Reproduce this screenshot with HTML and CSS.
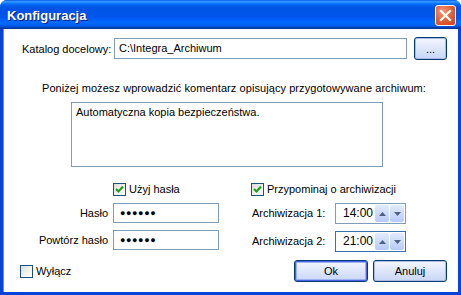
FILE: index.html
```html
<!DOCTYPE html>
<html lang="pl">
<head>
<meta charset="utf-8">
<title>Konfiguracja</title>
<link rel="stylesheet" href="styles.css">
</head>
<body>
<div class="window">
  <div class="titlebar">
    <span class="title">Konfiguracja</span>
    <span class="close">
      <svg width="13" height="13" viewBox="0 0 13 13"><path d="M2 2 L11 11 M11 2 L2 11" stroke="#fff" stroke-width="2.2" stroke-linecap="square"/></svg>
    </span>
  </div>
  <div class="client">
    <div class="row-path">
      <span class="path-label">Katalog docelowy:</span>
      <div class="field path-field">C:\Integra_Archiwum</div>
      <button class="btn btn-browse">...</button>
    </div>
    <p class="hint">Poniżej możesz wprowadzić komentarz opisujący przygotowywane archiwum:</p>
    <div class="field memo">Automatyczna kopia bezpieczeństwa.</div>
    <div class="options">
      <div class="group group-pass">
        <label class="check cell-2"><span class="box checked"><svg width="11" height="11" viewBox="0 0 11 11"><path d="M2 5 L4.5 7.5 L9 2.5" fill="none" stroke="#21a121" stroke-width="2.2"/></svg></span>Użyj hasła</label>
        <span class="lbl right">Hasło</span>
        <div class="field pass">●●●●●●</div>
        <span class="lbl right">Powtórz hasło</span>
        <div class="field pass">●●●●●●</div>
      </div>
      <div class="group group-time">
        <label class="check span-2"><span class="box checked"><svg width="11" height="11" viewBox="0 0 11 11"><path d="M2 5 L4.5 7.5 L9 2.5" fill="none" stroke="#21a121" stroke-width="2.2"/></svg></span>Przypominaj o archiwizacji</label>
        <span class="lbl">Archiwizacja 1:</span>
        <div class="spin">
          <span class="spin-val">14:00</span>
          <span class="spin-btn"><svg width="7" height="4" viewBox="0 0 7 4"><path d="M0 4 L3.5 0 L7 4Z" fill="#4d6185"/></svg></span>
          <span class="spin-btn"><svg width="7" height="4" viewBox="0 0 7 4"><path d="M0 0 L3.5 4 L7 0Z" fill="#4d6185"/></svg></span>
        </div>
        <span class="lbl">Archiwizacja 2:</span>
        <div class="spin focus">
          <span class="spin-val">21:00</span>
          <span class="spin-btn"><svg width="7" height="4" viewBox="0 0 7 4"><path d="M0 4 L3.5 0 L7 4Z" fill="#4d6185"/></svg></span>
          <span class="spin-btn"><svg width="7" height="4" viewBox="0 0 7 4"><path d="M0 0 L3.5 4 L7 0Z" fill="#4d6185"/></svg></span>
        </div>
      </div>
    </div>
    <div class="footer">
      <label class="check"><span class="box"></span>Wyłącz</label>
      <div class="buttons">
        <button class="btn btn-main default">Ok</button>
        <button class="btn btn-main">Anuluj</button>
      </div>
    </div>
  </div>
</div>
</body>
</html>
```
FILE: styles.css
```css
* { box-sizing: border-box; }
html, body { margin: 0; padding: 0; background: #fff; }
body { width: 461px; height: 295px; overflow: hidden; font-family: "Liberation Sans", Arial, sans-serif; font-size: 11px; color: #000; }

.window {
  width: 461px;
  height: 295px;
  display: flex;
  flex-direction: column;
  background: #0842d6;
  border-radius: 7px 7px 0 0;
  overflow: hidden;
}
.titlebar {
  height: 29px;
  flex: none;
  display: flex;
  align-items: center;
  justify-content: space-between;
  padding: 0 5px 0 7px;
  background: linear-gradient(to bottom, #0058ee 0%, #3593ff 5%, #288eff 8%, #127dff 11%, #036ffc 14%, #0262ee 18%, #0057e5 24%, #0054e3 30%, #0055eb 56%, #005bf5 66%, #026afe 76%, #0062ef 86%, #0052d6 92%, #0040ab 96%, #003092 100%);
}
.title {
  font-family: "Liberation Sans", Arial, sans-serif;
  font-weight: bold;
  font-size: 13px;
  color: #fff;
  text-shadow: 1px 1px 0 #0a1883;
  padding-top: 1px;
}
.close {
  width: 21px;
  height: 21px;
  border: 1px solid #fff;
  border-radius: 3px;
  background: radial-gradient(circle at 35% 30%, #f29a7a 0%, #e3643c 45%, #cc4218 100%);
  display: flex;
  align-items: center;
  justify-content: center;
  margin-top: 1px;
}
.client {
  flex: 1;
  margin: 0 3px 3px 3px;
  background: #fff;
  display: flex;
  flex-direction: column;
  border-left: 1px solid #5d8ef0;
}

.field {
  border: 1px solid #7f9db9;
  background: #fff;
  padding: 0 5px;
  white-space: nowrap;
}

.row-path {
  display: flex;
  align-items: center;
  margin-top: 8px;
  padding-left: 18px;
  height: 23px;
}
.path-label { width: 92px; }
.path-field { width: 293px; height: 21px; line-height: 19px; padding-left: 4px; }

.btn {
  font-family: "Liberation Sans", Arial, sans-serif;
  font-size: 11px;
  color: #000;
  border: 1px solid #003c74;
  border-radius: 3px;
  background: linear-gradient(to bottom, #f4f7fe 0%, #dde6fb 50%, #c8d6f7 100%);
  box-shadow: inset 0 0 0 1px #a9bde3;
  padding: 0;
}
.btn-browse { width: 33px; height: 23px; margin-left: 7px; line-height: 18px; }

.hint { margin: 22px 0 0 38px; line-height: 13px; letter-spacing: 0.07px; }

.memo {
  width: 312px;
  height: 65px;
  margin: 7px 0 0 67px;
  padding: 3px 4px;
  line-height: 13px;
}

.options {
  display: flex;
  margin-top: 16px;
}
.group {
  display: grid;
  row-gap: 7px;
  align-items: center;
}
.group-pass {
  grid-template-columns: 104px 106px;
  column-gap: 5px;
  grid-template-rows: 13px 20px 20px;
}
.group-time {
  grid-template-columns: 84px 71px;
  grid-template-rows: 13px 21px 21px;
  margin-left: 32px;
}
.cell-2 { grid-column: 2; }
.span-2 { grid-column: 1 / span 2; }
.right { text-align: right; }
.lbl { line-height: 13px; }
.group-time .lbl { padding-left: 1px; }

.check {
  display: flex;
  align-items: center;
  height: 13px;
  line-height: 13px;
}
.box {
  width: 13px;
  height: 13px;
  border: 1px solid #1c5180;
  background: linear-gradient(135deg, #dcdcd7 0%, #f4f4f1 60%, #fff 100%);
  margin-right: 3px;
  display: flex;
  align-items: center;
  justify-content: center;
  flex: none;
}

.pass {
  height: 20px;
  line-height: 18px;
  font-size: 9px;
  letter-spacing: 0.6px;
  padding-left: 6px;
}

.spin {
  height: 21px;
  border: 1px solid #7f9db9;
  display: flex;
  align-items: center;
  padding: 0 1px 0 0;
}
.spin.focus { border-color: #3c6fb0; }
.spin-val {
  flex: 1;
  padding-left: 7px;
  font-size: 12px;
  line-height: 19px;
}
.spin-btn {
  width: 14px;
  height: 17px;
  margin-left: 1px;
  border-radius: 2px;
  background: linear-gradient(to bottom, #e2eafc 0%, #c9d8fa 60%, #b6c9f6 100%);
  display: flex;
  align-items: center;
  justify-content: center;
}

.footer {
  display: flex;
  align-items: center;
  justify-content: space-between;
  margin-top: 8px;
  padding: 0 11px 0 16px;
  height: 22px;
}
.buttons { display: flex; gap: 5px; }
.btn-main { width: 74px; height: 22px; line-height: 18px; }
.btn-main.default { box-shadow: inset 0 0 0 1px #4a62e8, inset 0 0 0 2px #9db3f0; }
```
